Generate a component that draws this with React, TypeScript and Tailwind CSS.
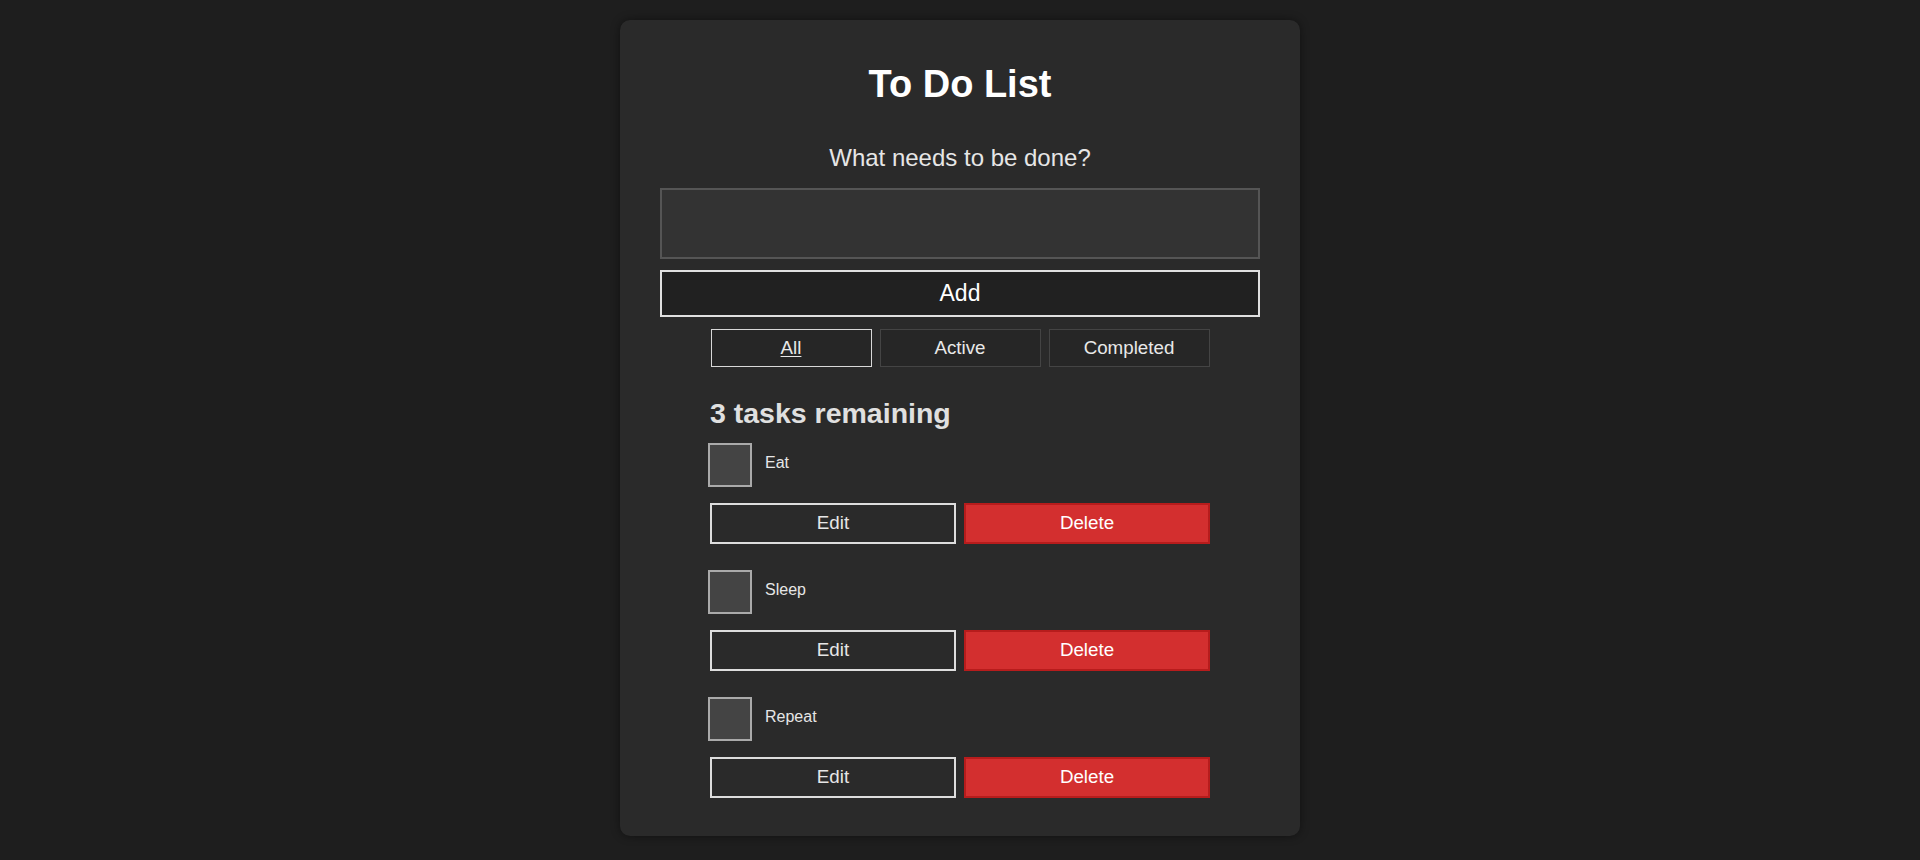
import React from "react";

const tasks = ["Eat", "Sleep", "Repeat"];

export default function App() {
  return (
    <div
      className="min-h-screen bg-[#1e1e1e] flex justify-center pt-[20px]"
      style={{ fontFamily: '"Liberation Sans", Arial, sans-serif' }}
    >
      <div className="w-[680px] self-start bg-[#2a2a2a] rounded-[10px] shadow-[0_0_10px_rgba(0,0,0,0.45)] px-[40px] pt-[43px] pb-[38px] flex flex-col">
        <h1 className="text-[38px] leading-[43px] font-bold text-white text-center">
          To Do List
        </h1>
        <label className="mt-[38px] text-[24px] leading-[28px] text-[#e6e6e6] text-center">
          What needs to be done?
        </label>
        <input
          type="text"
          className="mt-[16px] h-[71px] w-full bg-[#333333] border-2 border-[#555555] text-white px-3 outline-none"
        />
        <button className="mt-[11px] h-[47px] w-full bg-[#212121] border-2 border-[#e0e0e0] text-white text-[23px]">
          Add
        </button>
        <div className="mt-[12px] flex justify-center gap-[8px]">
          <button className="w-[161px] h-[38px] bg-[#262626] border border-[#d8d8d8] text-[#e8e8e8] text-[18.75px] underline underline-offset-[2px]">
            All
          </button>
          <button className="w-[161px] h-[38px] bg-[#262626] border border-[#444444] text-[#e8e8e8] text-[18.75px]">
            Active
          </button>
          <button className="w-[161px] h-[38px] bg-[#262626] border border-[#444444] text-[#e8e8e8] text-[18.75px]">
            Completed
          </button>
        </div>
        <div className="w-[500px] mx-auto flex flex-col">
          <h2 className="mt-[30px] text-[28.5px] leading-[32px] font-bold text-[#e0e0e0]">
            3 tasks remaining
          </h2>
          <ul className="mt-[14px] flex flex-col gap-[26px]">
            {tasks.map((t) => (
              <li key={t} className="flex flex-col">
                <div className="flex items-center -ml-[2px]">
                  <span className="w-[44px] h-[44px] bg-[#444444] border-2 border-[#aaaaaa] shrink-0" />
                  <span className="ml-[13px] mb-[5px] text-[16px] text-[#e6e6e6]">{t}</span>
                </div>
                <div className="mt-[16px] flex gap-[8px]">
                  <button className="w-[246px] h-[41px] bg-[#2a2a2a] border-2 border-[#dddddd] text-[#e6e6e6] text-[18.75px]">
                    Edit
                  </button>
                  <button className="w-[246px] h-[41px] bg-[#d32f2f] border-2 border-[#b71c1c] text-white text-[18.75px]">
                    Delete
                  </button>
                </div>
              </li>
            ))}
          </ul>
        </div>
      </div>
    </div>
  );
}
